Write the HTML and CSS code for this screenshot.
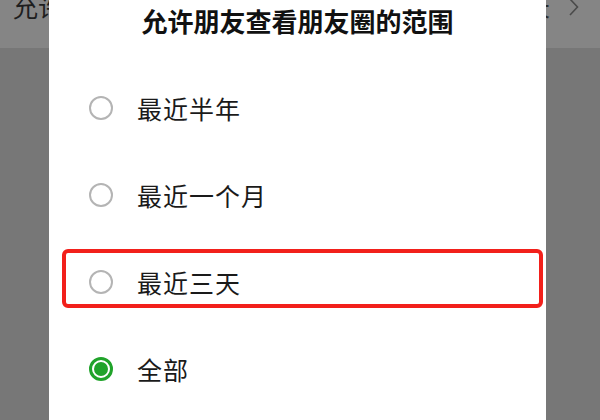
FILE: index.html
```html
<!DOCTYPE html>
<html lang="zh-CN">
<head>
  <meta charset="UTF-8">
  <meta name="viewport" content="width=device-width, initial-scale=1.0">
  <title>朋友圈权限</title>
  <link rel="stylesheet" href="styles.css">
</head>
<body>
  <!-- 背后的设置页 -->
  <div class="page">
    <div class="header">
      <span class="header-label">允许朋友查看朋友圈的范围</span>
      <span class="header-value">
        最近三天
        <svg class="chevron" width="10" height="18" viewBox="0 0 10 18">
          <path d="M1 1 L8.5 9 L1 17" fill="none" stroke="#4a4a4a" stroke-width="1.6"/>
        </svg>
      </span>
    </div>
  </div>

  <!-- 弹窗 -->
  <div class="dialog">
    <h2 class="dialog-title">允许朋友查看朋友圈的范围</h2>
    <ul class="options">
      <li class="option"><span class="radio"></span>最近半年</li>
      <li class="option"><span class="radio"></span>最近一个月</li>
      <li class="option marked"><span class="radio"></span>最近三天</li>
      <li class="option"><span class="radio checked"></span>全部</li>
    </ul>
  </div>
</body>
</html>
```

FILE: styles.css
```css
body {
  margin: 0;
  width: 600px;
  height: 420px;
  overflow: hidden;
  font-family: "Noto Sans CJK SC", "Noto Sans", sans-serif;
  background-color: #777777;
  color: #1a1a1a;
}
.page {
  height: 100%;
}
.header {
  height: 48px;
  background-color: #858585;
  display: flex;
  justify-content: space-between;
  align-items: flex-start;
  overflow: hidden;
}
.header-label {
  margin-top: -9px;
  padding-left: 13px;
  font-size: 25px;
  line-height: 30px;
  color: #1e1e1e;
}
.header-value {
  margin-top: -10px;
  padding-right: 21px;
  display: flex;
  align-items: center;
  gap: 19px;
  font-size: 25px;
  line-height: 30px;
  color: #2a2a2a;
}
.chevron {
  margin-top: 4px;
}
.dialog {
  position: absolute;
  top: 0; left: 49px; bottom: 0;
  width: 497px;
  background-color: #fff;
}
.dialog-title {
  margin: 0;
  height: 64px;
  box-sizing: border-box;
  padding-top: 6px;
  text-align: center;
  font-size: 26px;
  line-height: 30px;
  font-weight: bold;
  color: #111;
}
.options {
  list-style: none;
  margin: 0;
  padding: 0;
}
.option {
  position: relative;
  height: 87px;
  display: flex;
  align-items: center;
  gap: 24px;
  padding-left: 40px;
  font-size: 25px;
  letter-spacing: 1px;
}
.radio {
  width: 24px;
  height: 24px;
  box-sizing: border-box;
  border: 2px solid #b4b4b4;
  border-radius: 50%;
  display: flex;
  align-items: center;
  justify-content: center;
}
.radio.checked {
  border: 3px solid #20a32a;
}
.radio.checked::before {
  content: "";
  width: 14px;
  height: 14px;
  border-radius: 50%;
  background-color: #20a32a;
}
.option.marked::after {
  content: "";
  position: absolute;
  top: 11px; left: 13px; right: 3px; bottom: 17px;
  border: 4px solid #f2201b;
  border-radius: 6px;
}
```
